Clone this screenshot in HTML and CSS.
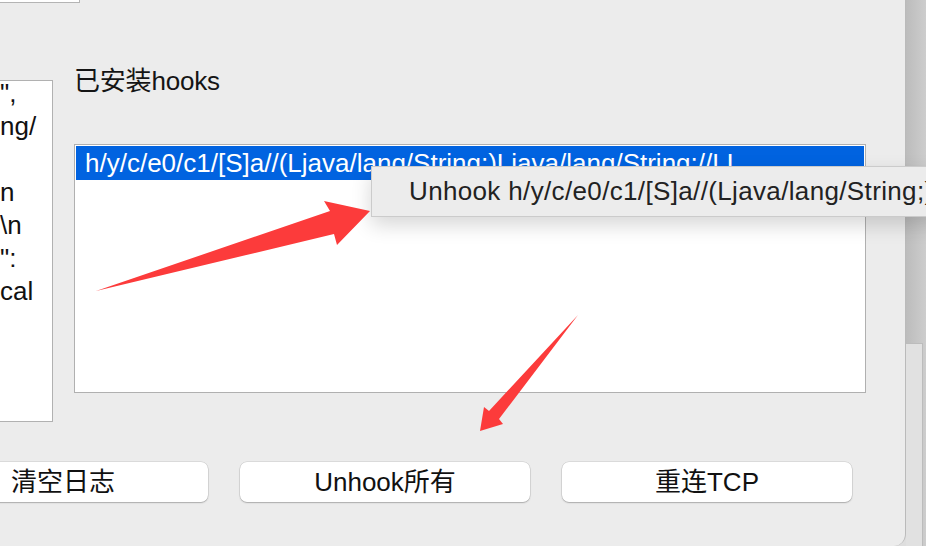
FILE: index.html
```html
<!DOCTYPE html>
<html lang="zh">
<head>
<meta charset="utf-8">
<title>Hooks</title>
<link rel="stylesheet" href="styles.css">
</head>
<body>
<div class="screen">
  <div class="window">
    <div class="stub"></div>
    <div class="main">
      <div class="log">
        <div class="log-text"><div>",</div><div>ng/</div><div>&nbsp;</div><div>n</div><div>\n</div><div>":</div><div>cal</div></div>
      </div>
      <div class="hooks">
        <div class="label">已安装hooks</div>
        <div class="list">
          <div class="row selected">h/y/c/e0/c1/[S]a//(Ljava/lang/String;)Ljava/lang/String;//LL</div>
        </div>
      </div>
    </div>
    <div class="buttons">
      <button class="btn">清空日志</button>
      <button class="btn">Unhook所有</button>
      <button class="btn">重连TCP</button>
    </div>
  </div>
  <div class="backdrop">
    <div class="bd-panel"></div>
  </div>

  <div class="menu">Unhook h/y/c/e0/c1/[S]a//(Ljava/lang/String;)Ljava/lang/String;//LL</div>

  <svg class="annot" width="926" height="546" viewBox="0 0 926 546">
    <path class="arrow" d="M96,291 L330,211 L324,201 L370,211 L337,245 L334,234 Z"/>
    <path class="arrow" d="M578,315 L489,411 L484,407 L480,431 L503,424 L499,419 Z"/>
  </svg>
</div>
</body>
</html>
```

FILE: styles.css
```css
html, body {
  margin: 0;
  padding: 0;
}

body {
  background: #ececec;
  font-family: "Liberation Sans", "Noto Sans CJK SC", sans-serif;
  overflow: hidden;
}

.screen {
  position: relative;
  display: flex;
  width: 926px;
  height: 546px;
  overflow: hidden;
  background: #dedede;
}

.window {
  flex: none;
  width: 905px;
  height: 546px;
  background: #ececec;
  border-right: 1px solid #bababa;
  border-bottom-right-radius: 12px;
  display: flex;
  flex-direction: column;
  overflow: hidden;
}

.stub {
  width: 79px;
  height: 2px;
  background: #fff;
  border-right: 1px solid #b4b4b4;
  border-bottom: 1px solid #b4b4b4;
}

.main {
  display: flex;
  padding-top: 63px;
}

.log {
  box-sizing: border-box;
  margin-top: 14px;
  width: 53px;
  height: 342px;
  background: #fff;
  border: 1px solid #b1b1b1;
  border-left: none;
  overflow: hidden;
}

.log-text {
  margin-top: -4px;
  font-size: 26px;
  line-height: 33px;
  white-space: pre;
  color: #111;
}

.hooks {
  margin-left: 21px;
}

.label {
  font-size: 26px;
  line-height: 30px;
  height: 30px;
  letter-spacing: -0.2px;
  color: #151515;
}

.list {
  box-sizing: border-box;
  margin-top: 48px;
  width: 792px;
  height: 249px;
  border: 1px solid #b0b0b0;
  padding: 1px;
  background: #fff;
}

.row {
  height: 34px;
  line-height: 34px;
  padding-left: 9px;
  font-size: 26px;
  white-space: nowrap;
  overflow: hidden;
}

.row.selected {
  background: #0163e0;
  color: #fff;
}

.buttons {
  display: flex;
  gap: 32px;
  margin-left: -82px;
  margin-top: 40px;
}

.btn {
  flex: none;
  width: 290px;
  height: 40px;
  padding: 0;
  background: #fff;
  border: none;
  border-radius: 7px;
  box-shadow: 0 0 0 0.5px rgba(0, 0, 0, 0.14), 0 1px 1.5px rgba(0, 0, 0, 0.22);
  font-family: "Liberation Sans", "Noto Sans CJK SC", sans-serif;
  font-size: 26px;
  color: #111;
  line-height: 40px;
  text-align: center;
}

.backdrop {
  flex: 1;
  display: flex;
  flex-direction: column;
  background: linear-gradient(to right, #bcbcbc, #cdcdcd);
}

.bd-panel {
  margin-top: 343px;
  flex: 1;
  width: 16px;
  background: #e1e1e1;
  border-top: 1px solid #bcbcbc;
  border-right: 1px solid #bcbcbc;
}

.menu {
  position: absolute;
  left: 371px;
  top: 166px;
  box-sizing: border-box;
  width: 620px;
  height: 51px;
  padding-left: 37px;
  background: #ececec;
  border: 1px solid #cbcbcb;
  border-right: none;
  box-shadow: 0 8px 20px rgba(0, 0, 0, 0.16);
  font-size: 26px;
  line-height: 49px;
  letter-spacing: 0.35px;
  color: #222;
  white-space: nowrap;
  overflow: hidden;
}

.annot {
  position: absolute;
  left: 0;
  top: 0;
  pointer-events: none;
}

.arrow {
  fill: #fc3b3b;
}
```
